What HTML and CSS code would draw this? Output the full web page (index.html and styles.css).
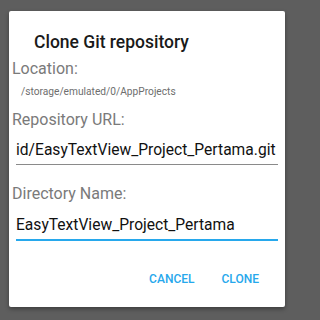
FILE: index.html
```html
<!DOCTYPE html>
<html>
<head>
<meta charset="utf-8">
<link rel="stylesheet" href="styles.css">
</head>
<body>
<div class="dialog">
  <div class="title">Clone Git repository</div>
  <div class="content">
    <div class="label label-location">Location:</div>
    <div class="path">/storage/emulated/0/AppProjects</div>
    <div class="label label-repo">Repository URL:</div>
    <div class="field">
      <div class="value">id/EasyTextView_Project_Pertama.git</div>
    </div>
    <div class="label label-dir">Directory Name:</div>
    <div class="field focused">
      <div class="value">EasyTextView_Project_Pertama</div>
    </div>
  </div>
  <div class="actions">
    <span class="btn">CANCEL</span>
    <span class="btn">CLONE</span>
  </div>
</div>
</body>
</html>
```

FILE: styles.css
```css
html, body {
  margin: 0;
  padding: 0;
  background: #5e5e5e;
  font-family: Roboto, "Noto Sans", sans-serif;
}
body {
  width: 294px;
  height: 320px;
  overflow: hidden;
  padding-top: 11px;
  box-sizing: border-box;
}
.dialog {
  margin-left: 9px;
  width: 276px;
  height: 296px;
  background: #ffffff;
  border-radius: 2px;
  box-shadow: 0 2px 4px rgba(0,0,0,0.35);
  box-sizing: border-box;
  padding-top: 21px;
  display: flex;
  flex-direction: column;
}
.title {
  font-size: 17.5px;
  font-weight: 500;
  line-height: 21px;
  color: #1a1a1a;
  padding-left: 25px;
}
.content {
  display: flex;
  flex-direction: column;
  padding: 0 7px 0 3px;
}
.label {
  font-size: 16px;
  line-height: 19px;
  color: #7a7a7a;
}
.label-location { margin-top: 6px; }
.label-repo { margin-top: 12px; }
.label-dir { margin-top: 19px; }
.path {
  font-size: 10.2px;
  line-height: 12px;
  color: #6e6e6e;
  margin-top: 8px;
  padding-left: 9px;
}
.field {
  margin-top: 12px;
  margin-left: 4px;
  border-bottom: 1px solid #8a8a8a;
  height: 24px;
  box-sizing: border-box;
}
.field.focused {
  margin-top: 13px;
  border-bottom: 2px solid #27a8ec;
  height: 25px;
}
.value {
  font-size: 15.6px;
  line-height: 19px;
  color: #111111;
  white-space: nowrap;
  overflow: hidden;
}
.actions {
  display: flex;
  justify-content: flex-end;
  gap: 27px;
  padding-right: 26px;
  margin-top: 31px;
}
.btn {
  font-size: 12px;
  font-weight: 500;
  line-height: 14px;
  color: #27a8ec;
}
```
